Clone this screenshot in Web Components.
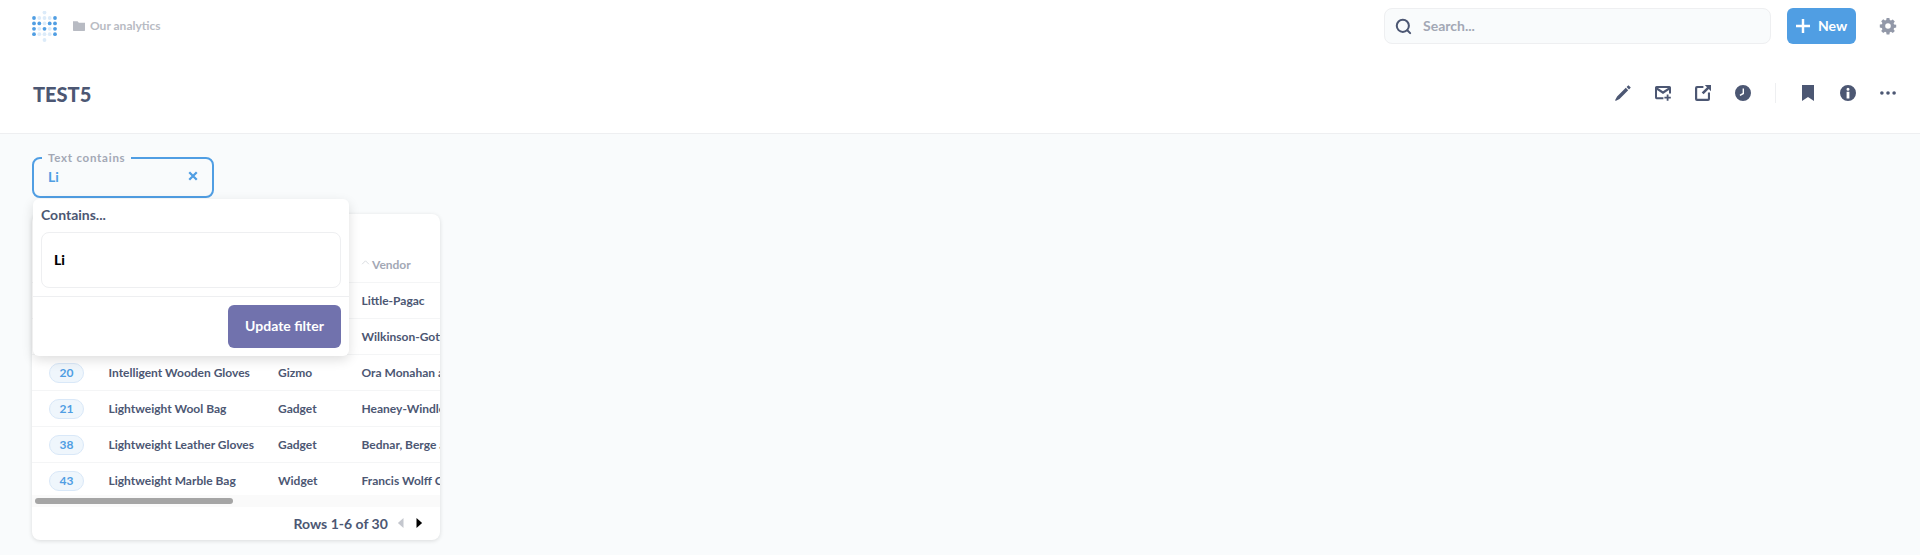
<!DOCTYPE html>
<html><head><meta charset="utf-8">
<style>
html,body{margin:0;padding:0;background:#f9fbfc;font-family:Lato,"Noto Sans",sans-serif;color:#4c5773;height:555px;overflow:hidden}
</style></head>
<body>
<x-app></x-app>
<script>
const ICONS={
search:'<circle cx="9.3" cy="9.3" r="7.2" fill="none" stroke="currentColor" stroke-width="2.4"/><path d="M14.6 14.6l3.4 3.4" stroke="currentColor" stroke-width="2.4" stroke-linecap="round" fill="none"/>',
plus:'<path d="M8 0v16M0 8h16" stroke="currentColor" stroke-width="2.8" fill="none"/>',
gear:'<path fill="currentColor" fill-rule="evenodd" d="M6.6 0h2.8l.4 2.1 1.2.5L12.8 1.4l2 2-1.2 1.8.5 1.2 2.1.4v2.8l-2.1.4-.5 1.2 1.2 1.8-2 2-1.8-1.2-1.2.5-.4 2.1H6.6l-.4-2.1-1.2-.5-1.8 1.2-2-2 1.2-1.8-.5-1.2L-.2 9.4V6.6l2.1-.4.5-1.2L1.2 3.2l2-2L5 2.6l1.2-.5zM8 5.2a2.8 2.8 0 1 0 0 5.6 2.8 2.8 0 0 0 0-5.6z"/>',
pencil:'<path fill="currentColor" d="M13.4 0.2l2.4 2.4-1.8 1.8-2.4-2.4zM10.8 2.8l2.4 2.4-8.7 8.7L1 15.8c-.5.2-1-.2-.8-.8l1.9-3.5z"/>',
mail:'<path fill="currentColor" fill-rule="evenodd" d="M1.6 1h12.8A1.6 1.6 0 0 1 16 2.6V8.4h-2V5.1L8 8.9 2 5.1V12.2H8.4v2H1.6A1.6 1.6 0 0 1 0 12.6v-10A1.6 1.6 0 0 1 1.6 1zM3 3L8 6.2 13 3z"/><path fill="currentColor" d="M11.7 9.4h1.8v2.3h2.3v1.8h-2.3v2.3h-1.8v-2.3H9.4v-1.8h2.3z"/>',
share:'<path fill="currentColor" d="M2 1h6.4v2.1H2.6a.4.4 0 0 0-.4.4v9.9c0 .2.2.4.4.4h9.9c.2 0 .4-.2.4-.4V7.6H15v6.3a2 2 0 0 1-2 2H2a2 2 0 0 1-2-2V3a2 2 0 0 1 2-2z"/><path fill="currentColor" d="M9.8 0H16v6.2l-2.2-2.2-5.2 5.3-1.9-1.9L12 2.2z"/>',
clock:'<path fill="currentColor" fill-rule="evenodd" d="M8 0a8 8 0 1 1 0 16A8 8 0 0 1 8 0zM9 3.6H7.6v4.5L4.6 9.7l.7 1.2L9 9z"/>',
bookmark:'<path fill="currentColor" d="M2 0h12v16L8 12 2 16z"/>',
info:'<path fill="currentColor" fill-rule="evenodd" d="M8 0a8 8 0 1 1 0 16A8 8 0 0 1 8 0zM8 2.8a1.5 1.5 0 1 0 0 3 1.5 1.5 0 0 0 0-3zM6.6 6.8v6.6h2.8V6.8z"/>',
dots:'<circle cx="1.9" cy="8" r="1.8" fill="currentColor"/><circle cx="8" cy="8" r="1.8" fill="currentColor"/><circle cx="14.1" cy="8" r="1.8" fill="currentColor"/>',
folder:'<path fill="currentColor" d="M0 1.8h6l1.8 2H16v10a.9.9 0 0 1-.9.9H.9a.9.9 0 0 1-.9-.9z"/>',
close:'<path d="M2 2l12 12M14 2L2 14" stroke="currentColor" stroke-width="3.6" fill="none"/>',
left:'<path fill="currentColor" d="M12 0v16L3 8z"/>',
right:'<path fill="currentColor" d="M4 0v16l9-8z"/>',
up:'<path d="M2 11l6-6 6 6" stroke="currentColor" stroke-width="1.6" fill="none"/>'
};
class XIcon extends HTMLElement{
  connectedCallback(){
    const n=this.getAttribute('name'),s=this.getAttribute('size')||16,vb=n==='search'?'0 0 19 19':'0 0 16 16';
    this.attachShadow({mode:'open'}).innerHTML=`<style>:host{display:inline-flex;flex:none;width:${s}px;height:${s}px}svg{display:block;width:100%;height:100%;overflow:visible}</style><svg viewBox="${vb}">${ICONS[n]}</svg>`;
  }
}
customElements.define('x-icon',XIcon);

class XLogo extends HTMLElement{
  connectedCallback(){
    const xs=[2,7.3,12.5,17.7,23],ys=[7,12.4,17.8,23.2];
    const dark=[[1,0,0,0,1],[1,1,0,1,1],[1,0,1,0,1],[1,0,0,0,1]];
    let c='<circle cx="12.5" cy="1.6" r="1.9" fill="#dcebf9"/><circle cx="12.5" cy="29" r="1.9" fill="#dcebf9"/>';
    ys.forEach((y,r)=>xs.forEach((x,i)=>{c+=`<circle cx="${x}" cy="${y}" r="1.9" fill="${dark[r][i]?'#509ee3':'#dcebf9'}"/>`}));
    this.attachShadow({mode:'open'}).innerHTML=`<style>:host{display:block;flex:none;width:25px;height:31px}svg{display:block}</style><svg width="25" height="31" viewBox="0 0 25 31">${c}</svg>`;
  }
}
customElements.define('x-logo',XLogo);

class XNav extends HTMLElement{
  connectedCallback(){
    this.attachShadow({mode:'open'}).innerHTML=`<style>
    :host{display:flex;align-items:center;height:52px;background:#fff;box-sizing:border-box;padding:0 24px 0 32px}
    .crumb{display:flex;align-items:center;gap:5px;margin-left:16px;color:#b8bbc3;font-size:12px;font-weight:700}
    .crumb span{margin-bottom:2px}
    .search{margin-left:auto;width:387px;height:36px;box-sizing:border-box;border:1px solid #eeeff1;border-radius:8px;background:#f9fbfc;display:flex;align-items:center;padding-left:10px;gap:12px;color:#4c5773}
    .search span{color:#a3a8b5;font-size:14px;font-weight:700;margin-bottom:2px}
    .new{margin-left:16px;width:69px;height:36px;box-sizing:border-box;padding-left:9px;border-radius:6px;background:#509ee3;color:#fff;display:flex;align-items:center;gap:8px;font-size:14px;font-weight:700}
    .new span{margin-bottom:2px}
    .gear{margin-left:24px;color:#9298a8;display:flex}
    </style>
    <x-logo></x-logo>
    <div class="crumb"><x-icon name="folder" size="12"></x-icon><span>Our analytics</span></div>
    <div class="search"><x-icon name="search" size="16"></x-icon><span>Search...</span></div>
    <div class="new"><x-icon name="plus" size="14"></x-icon><span>New</span></div>
    <div class="gear"><x-icon name="gear" size="16"></x-icon></div>`;
  }
}
customElements.define('x-nav',XNav);

class XHeader extends HTMLElement{
  connectedCallback(){
    this.attachShadow({mode:'open'}).innerHTML=`<style>
    :host{display:flex;align-items:center;height:81px;box-sizing:content-box;background:#fff;border-bottom:1px solid #eeeff1;padding:0 24px 0 33px}
    h1{margin:0;font-size:20px;font-weight:900;color:#4c5773;padding-top:3px;font-family:inherit}
    .tools{margin-left:auto;display:flex;align-items:center;padding-top:1px;color:#4c5773}
    .tools x-icon{margin-left:24px}
    .sep{width:1px;height:20px;background:#eeeff1;margin-left:24px;margin-right:0}
    </style>
    <h1>TEST5</h1>
    <div class="tools">
      <x-icon name="pencil"></x-icon><x-icon name="mail"></x-icon><x-icon name="share"></x-icon><x-icon name="clock"></x-icon>
      <div class="sep"></div>
      <x-icon name="bookmark"></x-icon><x-icon name="info"></x-icon><x-icon name="dots"></x-icon>
    </div>`;
  }
}
customElements.define('x-header',XHeader);

class XPopover extends HTMLElement{
  connectedCallback(){
    this.attachShadow({mode:'open'}).innerHTML=`<style>
    :host{display:block;position:absolute;left:-1px;top:40px;width:316px;height:157px;box-sizing:border-box;background:#fff;border-radius:6px;box-shadow:0 4px 12px rgba(0,0,0,.13);z-index:5}
    .t{padding:7px 8px 0;font-size:14px;font-weight:700;line-height:17px;color:#4c5773}
    .i{margin:9px 8px 0;height:56px;box-sizing:border-box;border:1px solid #eeeff1;border-radius:8px;display:flex;align-items:center;padding:0 0 2px 12px;font-size:14px;font-weight:900;color:#000}
    .f{margin-top:8px;border-top:1px solid #eeeff1;display:flex;justify-content:flex-end;padding:8px}
    .b{width:113px;height:43px;box-sizing:border-box;padding-bottom:2px;border-radius:6px;background:#7172ad;color:#fff;font-size:14px;font-weight:700;display:flex;align-items:center;justify-content:center}
    </style>
    <div class="t">Contains...</div>
    <div class="i">Li</div>
    <div class="f"><div class="b">Update filter</div></div>`;
  }
}
customElements.define('x-popover',XPopover);

class XFilter extends HTMLElement{
  connectedCallback(){
    this.attachShadow({mode:'open'}).innerHTML=`<style>
    :host{display:block;position:relative;width:182px;height:41px;box-sizing:border-box;border:2px solid #509ee3;border-radius:8px;color:#509ee3}
    .l{position:absolute;left:8px;top:-8px;padding:0 6px;background:#f9fbfc;color:#a3a8b5;font-size:11.5px;font-weight:700;letter-spacing:.75px;line-height:14px}
    .r{display:flex;align-items:center;justify-content:space-between;height:100%;padding:0 14px 3px 14px;box-sizing:border-box;font-size:14px;font-weight:700}
    </style>
    <div class="l">Text contains</div>
    <div class="r"><span>Li</span><x-icon name="close" size="10"></x-icon></div>
    <slot></slot>`;
  }
}
customElements.define('x-filter',XFilter);

class XRow extends HTMLElement{
  connectedCallback(){
    const id=this.getAttribute('rid')||'',title=this.getAttribute('t')||'',cat=this.getAttribute('c')||'',v=this.getAttribute('v')||'';
    this.attachShadow({mode:'open'}).innerHTML=`<style>
    :host{display:grid;grid-template-columns:76.5px 169.5px 83.5px 1fr;align-items:center;height:36px;box-sizing:border-box;border-bottom:1px solid #f4f5f6;width:700px;font-size:12px;font-weight:700;color:#4c5773;white-space:nowrap}
    .id{padding-left:17px}
    .b{display:inline-block;box-sizing:border-box;width:35px;height:20px;line-height:18px;text-align:center;border:1px solid #d9e8f8;border-radius:10px;background:#eff6fc;color:#509ee3}
    </style>
    <div class="id">${id?`<span class="b">${id}</span>`:''}</div><div>${title}</div><div>${cat}</div><div>${v}</div>`;
  }
}
customElements.define('x-row',XRow);

class XCard extends HTMLElement{
  connectedCallback(){
    this.attachShadow({mode:'open'}).innerHTML=`<style>
    :host{display:flex;flex-direction:column;width:408px;height:326px;margin-top:16px;background:#fff;border-radius:8px;box-shadow:0 1px 4px rgba(0,0,0,.13);overflow:hidden;box-sizing:border-box}
    .scroll{height:281px;overflow:hidden;flex:none}
    .head{height:69px;box-sizing:border-box;border-bottom:1px solid #f4f5f6;width:700px;display:flex;align-items:flex-end;padding:0 0 10px 329px;font-size:12px;font-weight:700;color:#a3a8b5;gap:2px}
    .head x-icon{color:#d4d7dd;margin-bottom:5px}
    .track{flex:none;height:12px;background:#fafafa;display:flex;align-items:center;padding-left:3px}
    .thumb{width:198px;height:6px;border-radius:3px;background:#a5a5a5}
    .foot{flex:1;display:flex;align-items:center;justify-content:flex-end;padding:0 15.8px 1px 0;font-size:14px;font-weight:700;color:#4c5773}
    </style>
    <div class="scroll">
      <div class="head"><x-icon name="up" size="9"></x-icon><span>Vendor</span></div>
      <x-row v="Little-Pagac"></x-row>
      <x-row v="Wilkinson-Gottlieb"></x-row>
      <x-row rid="20" t="Intelligent Wooden Gloves" c="Gizmo" v="Ora Monahan and Sons"></x-row>
      <x-row rid="21" t="Lightweight Wool Bag" c="Gadget" v="Heaney-Windler"></x-row>
      <x-row rid="38" t="Lightweight Leather Gloves" c="Gadget" v="Bednar, Berge and Sons"></x-row>
      <x-row rid="43" t="Lightweight Marble Bag" c="Widget" v="Francis Wolff Co."></x-row>
    </div>
    <div class="track"><div class="thumb"></div></div>
    <div class="foot"><span>Rows 1-6 of 30</span><x-icon name="left" size="10" style="color:#c4c7ce;margin-left:8px"></x-icon><x-icon name="right" size="10" style="color:#000;margin-left:8.4px"></x-icon></div>`;
  }
}
customElements.define('x-card',XCard);

class XApp extends HTMLElement{
  connectedCallback(){
    this.attachShadow({mode:'open'}).innerHTML=`<style>
    :host{display:block;height:555px;background:#f9fbfc}
    main{padding:23px 32px 0}
    </style>
    <x-nav></x-nav>
    <x-header></x-header>
    <main>
      <x-filter><x-popover></x-popover></x-filter>
      <x-card></x-card>
    </main>`;
  }
}
customElements.define('x-app',XApp);
</script>
</body></html>
